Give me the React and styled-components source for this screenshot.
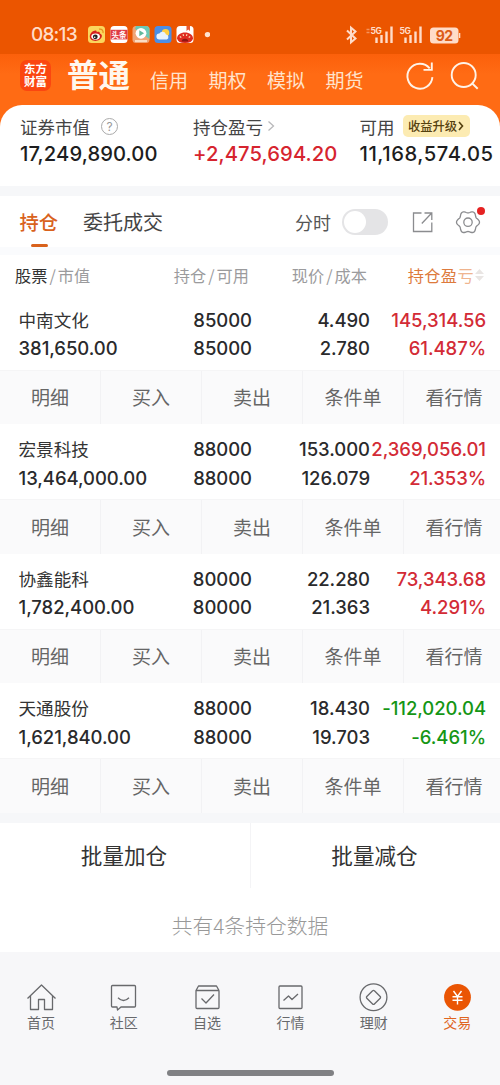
import React from "react"
import styled, { createGlobalStyle } from "styled-components"

const holdings = [
  {
    name: "中南文化",
    value: "381,650.00",
    qty: "85000",
    usable: "85000",
    price: "4.490",
    cost: "2.780",
    profit: "145,314.56",
    rate: "61.487%",
  },
  {
    name: "宏景科技",
    value: "13,464,000.00",
    qty: "88000",
    usable: "88000",
    price: "153.000",
    cost: "126.079",
    profit: "2,369,056.01",
    rate: "21.353%",
  },
  {
    name: "协鑫能科",
    value: "1,782,400.00",
    qty: "80000",
    usable: "80000",
    price: "22.280",
    cost: "21.363",
    profit: "73,343.68",
    rate: "4.291%",
  },
  {
    name: "天通股份",
    value: "1,621,840.00",
    qty: "88000",
    usable: "88000",
    price: "18.430",
    cost: "19.703",
    profit: "-112,020.04",
    rate: "-6.461%",
    down: true,
  },
]

const actions = ["明细", "买入", "卖出", "条件单", "看行情"]

// six-lobed cog outline around (cx, cy)
const cogPoints = (cx, cy) =>
  Array.from({ length: 72 }, (_, i) => {
    const t = (i * Math.PI) / 36
    const r = 10.4 + 1.1 * Math.cos(6 * t)
    return `${(cx + r * Math.cos(t)).toFixed(2)},${(cy + r * Math.sin(t)).toFixed(2)}`
  }).join(" ")

function StatusIcons() {
  return (
    <AppIcons width="122" height="18" viewBox="0 0 122 18">
      <rect x="0" y="0" width="17" height="17" rx="3.5" fill="#fbd65d" />
      <path d="M1.800 10.500c0-3.500 3.800-6.500 6-6 1 .2 1 1 .8 1.700 2-.8 3.600-.4 3.200 1.400 1.600.5 2.400 1.500 2 3-.6 2.600-3.400 4.300-6.500 4.300-3 0-5.500-1.800-5.500-4.400z" fill="#d5201f" />
      <ellipse cx="7.600" cy="10.600" rx="4.300" ry="3.100" fill="#fff" />
      <circle cx="7.300" cy="10.800" r="2.400" fill="#222" />
      <circle cx="6.700" cy="11.200" r=".8" fill="#fff" />
      <path d="M11 3.200c2.800-.6 4.600 1.300 4 4" fill="none" stroke="#e8901e" strokeWidth="1.200" />
      <rect x="22.500" y="0" width="17" height="17" rx="3.500" fill="#fff" />
      <rect x="22.500" y="3.800" width="17" height="9.600" fill="#e03a44" />
      <HeadlineText x="31" y="11.500" textAnchor="middle">头条</HeadlineText>
      <rect x="44.500" y="0" width="17" height="17" rx="3.500" fill="#f0a577" />
      <path d="M48 0h10a3.500 3.500 0 0 1 3.500 3.500V13L47 3z" fill="#6cc9b5" />
      <circle cx="53" cy="7.300" r="5.400" fill="#fff" />
      <path d="M51.300 4.300v6l4.800-3z" fill="#62b99b" />
      <path d="M47 15h12" stroke="#fff2dd" strokeWidth="1.500" />
      <rect x="66.500" y="0" width="17" height="17" rx="3.500" fill="#4b8ee6" />
      <circle cx="77.500" cy="6.800" r="3.800" fill="#ffcf42" />
      <path d="M71.500 13.500a3 3 0 0 1-.2-6 3.700 3.700 0 0 1 6.700 1 2.600 2.600 0 0 1 .8 5z" fill="#e9f3fd" />
      <rect x="88.500" y="0" width="17" height="17" rx="3.500" fill="#fff" />
      <path d="M89 12.500c0-3.500 3.500-6 8-6s8 2.500 8 6q-1 4.500-8 4.500t-8-4.500z" fill="#de2b20" />
      <path d="M98.500 0v5l1.800-1.500 1.700 1.500V0z" fill="#e75a32" />
      <path d="M91.800 10.500l1.500 1M95 8.300l.6 1.600M99 8.300l-.6 1.600M102.200 10.500l-1.500 1" stroke="#ffe3b8" strokeWidth="1.200" />
      <path d="M93.700 15.500a3.300 2.800 0 0 1 6.600 0z" fill="#8d1712" />
      <circle cx="119.500" cy="8.600" r="2.700" fill="#ffe3d0" />
    </AppIcons>
  )
}

function SignalIcons() {
  return (
    <svg width="116" height="20" viewBox="0 0 116 20" fill="none">
      <path d="M2 5.500l8.500 8L6 17.300V2.700L10.500 6.500 2 14.500" stroke="#ffdcc8" strokeWidth="2" />
      <path d="M21.500 4.500h3M21.500 7.500h3" stroke="#f5935c" strokeWidth="1.300" />
      <SignalText x="25.500" y="8.500">5G</SignalText>
      <path d="M31.500 18V12.500M36.500 18V10M41.500 18V6.500M46.500 18V1.500" stroke="#ffdcc8" strokeWidth="2.400" />
      <SignalText x="54.500" y="8.500">5G</SignalText>
      <path d="M60.500 18V12.500M65.500 18V10M70.500 18V6.500M75.500 18V1.500" stroke="#ffdcc8" strokeWidth="2.400" />
      <rect x="85" y="2.500" width="28.500" height="16" rx="3.500" fill="#ffdcc8" />
      <path d="M114.600 8v5" stroke="#ffdcc8" strokeWidth="1.400" />
      <BatteryText x="99.200" y="15.600" textAnchor="middle">92</BatteryText>
    </svg>
  )
}

function TabIcon({ type }) {
  const paths = {
    home: <path d="M1.500 15.500L15.500 2l14 13.500M4.500 13v13.500h8V16.500h6v10h8V13" />,
    chat: (
      <>
        <path d="M4.500 2.500h22a1 1 0 0 1 1 1v19.500a1 1 0 0 1-1 1H13l-3.500 3-.5-3H4.500a1 1 0 0 1-1-1v-19.500a1 1 0 0 1 1-1z" />
        <path d="M10 14.800q5.500 5.500 11 0" />
      </>
    ),
    pick: (
      <>
        <path d="M4 7.500h23v17a1 1 0 0 1-1 1H5a1 1 0 0 1-1-1zM4 7.500L6.500 3h18L27 7.500" />
        <path d="M9.500 15.500l4.500 4.500 8-8.500" />
      </>
    ),
    market: (
      <>
        <rect x="4" y="3" width="23" height="22.500" rx="1" />
        <path d="M8.500 17.500l5-4.500 3.500 3.500 6-5.500" />
      </>
    ),
    wealth: (
      <>
        <circle cx="15.500" cy="14.300" r="13.400" />
        <path d="M14.600 7.700l-5.800 5.800a1.200 1.200 0 0 0 0 1.700l5.800 5.800a1.200 1.200 0 0 0 1.800 0l5.800-5.800a1.200 1.200 0 0 0 0-1.700L16.400 7.700a1.200 1.200 0 0 0-1.800 0z" />
      </>
    ),
    trade: (
      <>
        <circle cx="15.500" cy="14.300" r="13.400" fill="#ea5504" stroke="none" />
        <path d="M11.500 8l4 5.500 4-5.500M15.500 13.500v8M10.500 13.800h10M10.500 17.300h10" stroke="#fff" strokeWidth="1.400" />
      </>
    ),
  }
  return (
    <svg width="31" height="30" viewBox="0 0 31 30" fill="none" stroke="#68696c" strokeWidth="1.300" strokeLinejoin="round">
      {paths[type]}
    </svg>
  )
}

function Holding({ item }) {
  return (
    <>
      <HoldingRow>
        <Cell $left>
          <StockName>{item.name}</StockName>
          <Num>{item.value}</Num>
        </Cell>
        <Cell>
          <Num>{item.qty}</Num>
          <Num>{item.usable}</Num>
        </Cell>
        <Cell>
          <Num>{item.price}</Num>
          <Num>{item.cost}</Num>
        </Cell>
        <Cell>
          <Num $color={item.down ? "#159615" : "#d32b36"}>{item.profit}</Num>
          <Num $color={item.down ? "#159615" : "#d32b36"}>{item.rate}</Num>
        </Cell>
      </HoldingRow>
      <Actions>
        {actions.map((a) => (
          <Action key={a}>{a}</Action>
        ))}
      </Actions>
    </>
  )
}

function App() {
  return (
    <Page>
      <GlobalStyle />
      <StatusBar>
        <Clock>08:13</Clock>
        <StatusIcons />
        <SignalIcons />
      </StatusBar>
      <TopBar>
        <Logo>东方财富</Logo>
        <CurrentMode>普通</CurrentMode>
        <Modes>
          <span>信用</span>
          <span>期权</span>
          <span>模拟</span>
          <span>期货</span>
        </Modes>
        <svg width="76" height="32" viewBox="0 0 76 32" fill="none" stroke="#fff3e8" strokeWidth="1.900">
          <path d="M27.400 17.200A12.500 12.500 0 1 1 24.700 8.400" />
          <path d="M26.800 2.500v7.400h-8.300" />
          <circle cx="58.700" cy="15" r="12" />
          <path d="M67.300 23.500l5.400 5.200" />
        </svg>
      </TopBar>
      <CardBack>
        <Summary>
          <SummaryItem $w={173}>
            <SummaryLabel>
              证券市值
              <Question>?</Question>
            </SummaryLabel>
            <SummaryNum>17,249,890.00</SummaryNum>
          </SummaryItem>
          <SummaryItem $w={166.5}>
            <SummaryLabel>
              持仓盈亏
              <svg width="10" height="12" viewBox="0 0 10 12" fill="none" stroke="#b9b9bb" strokeWidth="1.300">
                <path d="M2.500 1.500L7.500 6l-5 4.500" />
              </svg>
            </SummaryLabel>
            <SummaryNum $color="#d6242f">+2,475,694.20</SummaryNum>
          </SummaryItem>
          <SummaryItem>
            <SummaryLabel>
              可用
              <Promo>
                收益升级
                <svg width="6" height="10" viewBox="0 0 6 10" fill="none" stroke="#54400f" strokeWidth="1.600">
                  <path d="M1 1l3.500 4L1 9" />
                </svg>
              </Promo>
            </SummaryLabel>
            <SummaryNum $spacing={0.55}>11,168,574.05</SummaryNum>
          </SummaryItem>
        </Summary>
      </CardBack>
      <Gap $h={10} />
      <Tabs>
        <Tab $active>持仓</Tab>
        <Tab>委托成交</Tab>
        <Minute>分时</Minute>
        <Switch>
          <Knob />
        </Switch>
        <svg width="76" height="36" viewBox="0 0 76 36" fill="none" stroke="#8b8c8f" strokeWidth="1.300">
          <path d="M9.500 9H1.500v18.500h18.300V18.500M12.500 9h7.300v7M19.500 9.300L9.800 19.500" />
          <polygon points={cogPoints(56, 18.200)} />
          <circle cx="56" cy="18.200" r="4.200" />
          <circle cx="69" cy="7" r="4" fill="#e52222" stroke="none" />
        </svg>
      </Tabs>
      <Gap $h={8} $light />
      <TableHead>
        <HeadCell $left>
          <b>股票</b>
          <s>/</s>市值
        </HeadCell>
        <HeadCell>
          持仓<s>/</s>可用
        </HeadCell>
        <HeadCell>
          现价<s>/</s>成本
        </HeadCell>
        <HeadCell $sorted>
          持仓盈<i>亏</i>
          <svg width="11" height="14" viewBox="0 0 11 14" fill="#e9e5e3">
            <path d="M5.500 1l4.500 5H1zM5.500 13L10 8H1z" />
          </svg>
        </HeadCell>
      </TableHead>
      {holdings.map((h) => (
        <Holding key={h.name} item={h} />
      ))}
      <Gap $h={10} />
      <Batch>
        <span>批量加仓</span>
        <span>批量减仓</span>
      </Batch>
      <Total>共有4条持仓数据</Total>
      <BottomNav>
        <NavItem><TabIcon type="home" />首页</NavItem>
        <NavItem><TabIcon type="chat" />社区</NavItem>
        <NavItem><TabIcon type="pick" />自选</NavItem>
        <NavItem><TabIcon type="market" />行情</NavItem>
        <NavItem><TabIcon type="wealth" />理财</NavItem>
        <NavItem $active><TabIcon type="trade" />交易</NavItem>
      </BottomNav>
      <HomeArea>
        <HomeBar />
      </HomeArea>
    </Page>
  )
}

export default App

const GlobalStyle = createGlobalStyle`
  * {
    box-sizing: border-box;
  }
  body {
    margin: 0;
    font-family: "Noto Sans CJK SC", sans-serif;
    color: #333;
  }
  svg {
    flex: none;
    display: block;
  }
`
const Page = styled.div`
  width: 500px;
  height: 1085px;
  overflow: hidden;
  display: flex;
  flex-direction: column;
  background: #fff;
  white-space: nowrap;
  > * {
    flex-shrink: 0;
  }
`
const StatusBar = styled.div`
  height: 54px;
  padding: 15px 0 0 31px;
  display: flex;
  align-items: center;
  background: #eb5500;
`
const Clock = styled.div`
  width: 57px;
  font: 550 19px/22px Inter, sans-serif;
  letter-spacing: -0.8px;
  color: #ffdcc8;
`
const AppIcons = styled.svg`
  margin-right: 135px;
`
const HeadlineText = styled.text`
  font-size: 7.5px;
  font-weight: 700;
  fill: #fff;
`
const SignalText = styled.text`
  font: 700 8.5px Inter, sans-serif;
  letter-spacing: -0.5px;
  fill: #ffdcc8;
`
const BatteryText = styled.text`
  font: 700 14px Inter, sans-serif;
  letter-spacing: -0.4px;
  fill: #dc5c18;
`
const TopBar = styled.div`
  height: 51px;
  padding: 0 0 8px 20px;
  display: flex;
  align-items: center;
  background: linear-gradient(#fc600b, #ff6b14 40%);
`
const Logo = styled.div`
  width: 31px;
  height: 31px;
  padding: 2px 3px 0 4px;
  border-radius: 7px;
  margin-right: 16px;
  white-space: normal;
  word-break: break-all;
  background: #fb4610;
  color: #fff;
  font-size: 11.5px;
  font-weight: 700;
  line-height: 13px;
`
const CurrentMode = styled.div`
  width: 83px;
  padding-bottom: 5px;
  font-size: 31.5px;
  font-weight: 700;
  line-height: 40px;
  color: #fff8ee;
`
const Modes = styled.div`
  width: 255px;
  padding-top: 9px;
  display: flex;
  gap: 20.5px;
  font-size: 19px;
  line-height: 26px;
  color: #ffe3cc;
`
const CardBack = styled.div`
  height: 81px;
  background: linear-gradient(#ff6b14 30px, #fff 30px);
`
const Summary = styled.div`
  height: 81px;
  padding: 9px 0 0 20px;
  display: flex;
  background: #fff;
  border-radius: 22px 22px 0 0;
`
const SummaryItem = styled.div`
  width: ${(p) => (p.$w ? p.$w + "px" : "auto")};
`
const SummaryLabel = styled.div`
  height: 24px;
  display: flex;
  align-items: center;
  font-size: 17.5px;
  color: #444;
  svg {
    margin-left: 3px;
  }
`
const SummaryNum = styled.div`
  font: 550 20.2px/28px Inter, sans-serif;
  margin-top: 2px;
  letter-spacing: ${(p) => p.$spacing || 0.1}px;
  color: ${(p) => p.$color || "#1d1d20"};
`
const Question = styled.span`
  width: 17px;
  height: 17px;
  margin-left: 11px;
  border: 1px solid #aaa;
  border-radius: 50%;
  text-align: center;
  font: 12px/15px Inter, sans-serif;
  color: #999;
`
const Promo = styled.span`
  width: 67px;
  height: 22px;
  margin-left: 8px;
  display: flex;
  align-items: center;
  justify-content: center;
  border-radius: 5px;
  background: #fcebb2;
  color: #54400f;
  font-size: 12.3px;
  font-weight: 500;
  svg {
    margin-left: 1px;
  }
`
const Gap = styled.div`
  height: ${(p) => p.$h}px;
  background: ${(p) => (p.$light ? "#fafbfd" : "#f6f7f9")};
`
const Tabs = styled.div`
  height: 51px;
  padding-left: 19.5px;
  display: flex;
  align-items: center;
`
const Tab = styled.div`
  position: relative;
  margin-right: 25px;
  font-size: ${(p) => (p.$active ? 19.3 : 20)}px;
  font-weight: ${(p) => (p.$active ? 500 : 400)};
  color: ${(p) => (p.$active ? "#d9621c" : "#444")};
  line-height: 30px;
  &::after {
    content: "";
    display: ${(p) => (p.$active ? "block" : "none")};
    position: absolute;
    left: 11px;
    bottom: -10px;
    width: 17px;
    height: 3px;
    border-radius: 2px;
    background: #d9621c;
  }
`
const Minute = styled.div`
  margin-left: 107px;
  font-size: 18px;
  line-height: 28px;
  color: #555;
`
const Switch = styled.div`
  width: 46px;
  height: 26px;
  margin: 0 24px 0 10.5px;
  padding: 2px;
  border-radius: 13px;
  background: #e4e4e6;
`
const Knob = styled.div`
  width: 22px;
  height: 22px;
  border-radius: 50%;
  background: #fff;
`
const TableHead = styled.div`
  height: 39.5px;
  padding: 1px 14px 1px 15px;
  display: grid;
  grid-template-columns: 125px 109px 118px 1fr;
  align-items: center;
`
const HeadCell = styled.div`
  display: flex;
  align-items: center;
  justify-content: ${(p) => (p.$left ? "flex-start" : "flex-end")};
  margin-right: ${(p) => (p.$sorted ? 1 : 0)}px;
  font-size: 16.2px;
  line-height: 24px;
  letter-spacing: ${(p) => (p.$sorted ? 0.4 : 0.1)}px;
  color: ${(p) => (p.$sorted ? "#dd7a3c" : "#9b9b9d")};
  b {
    font-weight: 400;
    color: #333;
  }
  s {
    margin: 0 1.8px;
    text-decoration: none;
  }
  i {
    font-style: normal;
    color: #efb48e;
  }
`
const HoldingRow = styled.div`
  height: 75px;
  padding: 11px 14px 0 18.5px;
  display: grid;
  grid-template-columns: 121.5px 112px 118px 116px;
`
const Cell = styled.div`
  display: flex;
  flex-direction: column;
  align-items: ${(p) => (p.$left ? "flex-start" : "flex-end")};
`
const StockName = styled.div`
  height: 28.5px;
  font-size: 17.6px;
  line-height: 27px;
  color: #333;
`
const Num = styled.div`
  font: 550 18.5px/28.5px Inter, sans-serif;
  letter-spacing: -0.05px;
  color: ${(p) => p.$color || "#2a2a2c"};
`
const Actions = styled.div`
  height: 54.6px;
  display: grid;
  grid-template-columns: repeat(5, 101px);
  overflow: hidden;
  background: #fafafb;
  border-top: 1px solid #f5f5f6;
`
const Action = styled.div`
  display: flex;
  align-items: center;
  justify-content: center;
  padding-bottom: 1px;
  border-right: 1px solid #f2f2f4;
  font-size: 19px;
  color: #666;
`
const Batch = styled.div`
  height: 65px;
  display: grid;
  grid-template-columns: 251px 249px;
  line-height: 63px;
  text-align: center;
  font-size: 21.6px;
  color: #333;
  span:first-child {
    padding-right: 2px;
    border-right: 1px solid #f4f4f6;
  }
  span:last-child {
    padding-right: 2px;
  }
`
const Total = styled.div`
  height: 64px;
  line-height: 74px;
  text-align: center;
  font-size: 20.8px;
  font-weight: 300;
  color: #999;
`
const BottomNav = styled.div`
  height: 98px;
  padding: 31px 0 0;
  display: grid;
  grid-template-columns: 82px repeat(5, 83.4px);
  background: #f7f7f9;
`
const NavItem = styled.div`
  display: flex;
  flex-direction: column;
  align-items: center;
  font-size: 14px;
  line-height: 18px;
  color: ${(p) => (p.$active ? "#e0651f" : "#68696c")};
`
const HomeArea = styled.div`
  flex: 1;
  padding-top: 20px;
  background: #f7f7f9;
`
const HomeBar = styled.div`
  width: 167px;
  height: 6px;
  margin: 0 auto;
  border-radius: 3px;
  background: #808184;
`
